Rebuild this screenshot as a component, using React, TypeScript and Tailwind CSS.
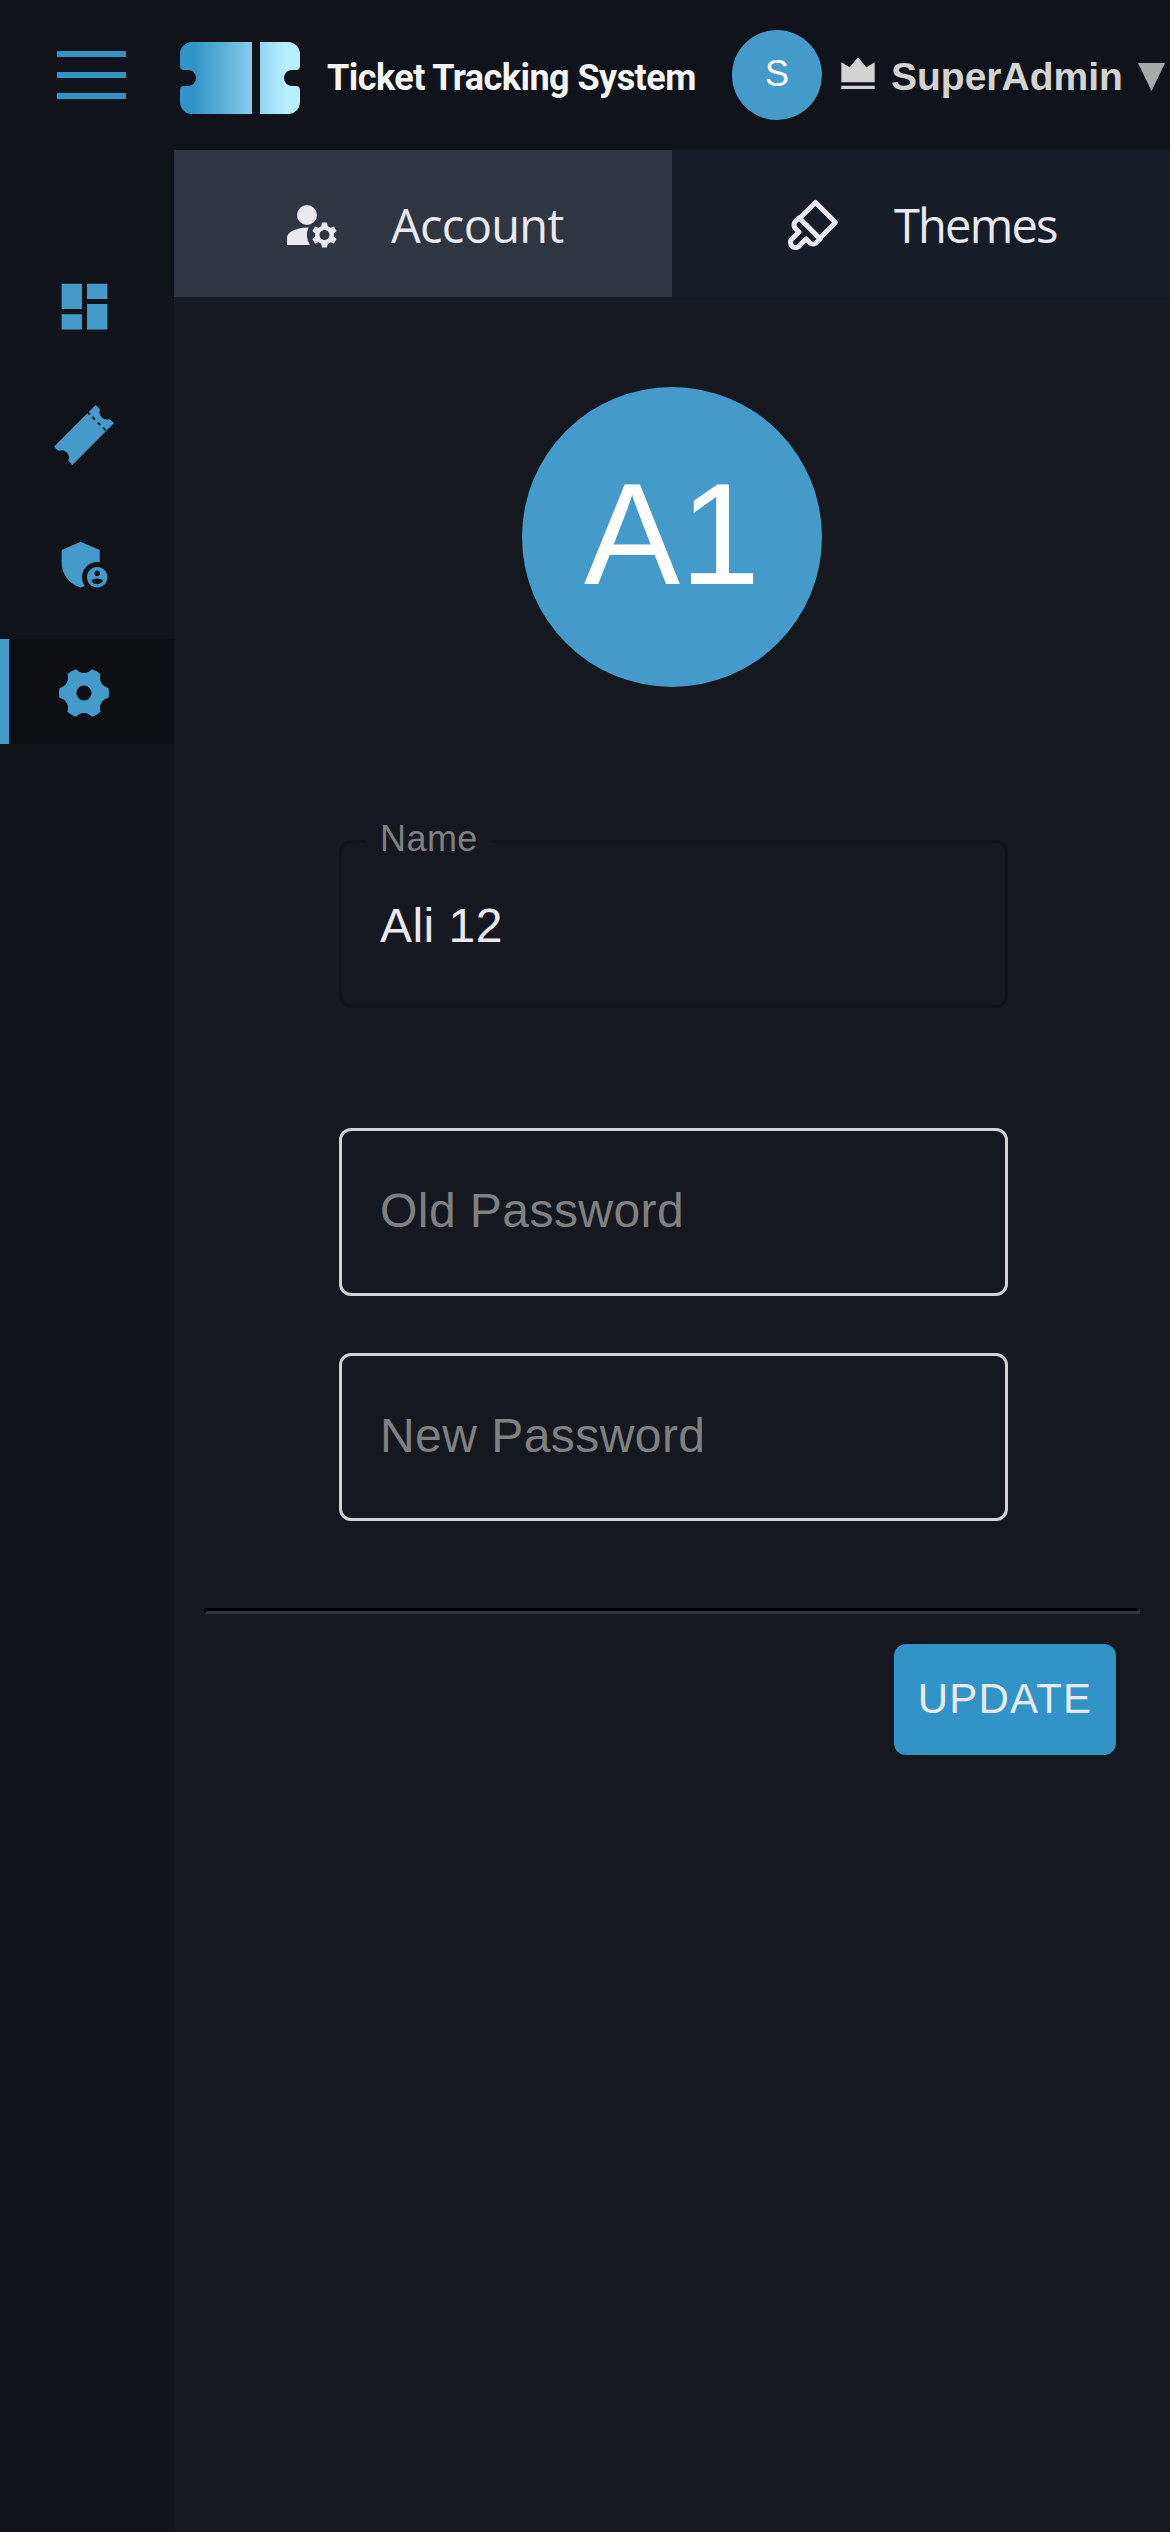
import type { ReactNode } from "react";
import { BiBrush } from "react-icons/bi";
import { MdAdminPanelSettings, MdDashboard, MdManageAccounts } from "react-icons/md";
import { RiSettings4Fill, RiVipCrownFill } from "react-icons/ri";

function TicketLogo() {
  return (
    <svg width="120" height="72" viewBox="0 0 120 72">
      <defs>
        <linearGradient id="logo" gradientUnits="userSpaceOnUse" x1="0" y1="0" x2="120" y2="0">
          <stop offset="0.12" stopColor="#3294c6" />
          <stop offset="0.88" stopColor="#b8efff" />
        </linearGradient>
      </defs>
      <path
        fill="url(#logo)"
        d="M12 0H72V72H12A12 12 0 0 1 0 60V48Q0 44 4 44H8A8 8 0 0 0 8 28H4Q0 28 0 24V12A12 12 0 0 1 12 0Z"
      />
      <path
        fill="url(#logo)"
        d="M80 0H108A12 12 0 0 1 120 12V24Q120 28 116 28H112A8 8 0 0 0 112 44H116Q120 44 120 48V60A12 12 0 0 1 108 72H80Z"
      />
    </svg>
  );
}

function TicketIcon() {
  return (
    <svg width="60" height="60" viewBox="0 0 180 180" fill="currentColor">
      <path d="M125 0 138 13A22 22 0 0 0 166 42L180 54 55 180 43 167A22 22 0 0 0 14 138L0 125Z" />
      <path
        d="M101 22l7 7M115 36l8 8M131 52l8 8M147 68l8 8"
        stroke="#10131a"
        strokeWidth="5.5"
        fill="none"
      />
    </svg>
  );
}

function NavItem({ children }: { children: ReactNode }) {
  return <div className="flex h-[105px] items-center pl-[54px] pt-[3px]">{children}</div>;
}

function PasswordField({ label }: { label: string }) {
  return (
    <label className="flex h-[168px] w-[669px] items-center rounded-xl border-[3px] border-[#d3d3d3] px-[38px] pb-[3px] text-[48px] leading-none tracking-[0.00938em] text-[#808080]">
      {label}
    </label>
  );
}

export default function App() {
  return (
    <div className="flex h-[2532px] w-[1170px] flex-col overflow-hidden bg-[#15181f] font-['Liberation_Sans',Arial,sans-serif]">
      <header className="flex h-[150px] shrink-0 items-center bg-[#10131a]">
        <div className="ml-[57px] flex w-[69px] flex-col gap-[15px]">
          <span className="h-[6px] bg-[#3294c6]" />
          <span className="h-[6px] bg-[#3294c6]" />
          <span className="h-[6px] bg-[#3294c6]" />
        </div>
        <div className="ml-[54px] pt-[6px]">
          <TicketLogo />
        </div>
        <h1 className="ml-[27px] w-[405px] whitespace-nowrap pt-[5px] font-['Roboto',sans-serif] text-[36px] font-bold leading-none tracking-[-0.55px] text-[#f5f5f5]">
          Ticket Tracking System
        </h1>
        <div className="flex size-[90px] items-center justify-center rounded-full bg-[#449bc9] pb-[2px] text-[36px] leading-none text-white">
          S
        </div>
        <RiVipCrownFill size={40} className="mb-[2px] ml-4 shrink-0 text-[#d3d3d3]" />
        <span className="ml-[13px] w-[247px] pt-[3px] text-[39px] font-bold leading-none text-[#d3d3d3]">
          SuperAdmin
        </span>
        <svg width="27" height="28" viewBox="0 0 27 28" className="mt-1 shrink-0">
          <path d="M0 0H27L13.5 28Z" fill="#a9a9a9" />
        </svg>
      </header>

      <div className="flex flex-1">
        <nav className="flex w-[174px] shrink-0 flex-col gap-6 bg-[#10131a] pt-[102px] text-[#449bc9]">
          <NavItem>
            <MdDashboard size={61} />
          </NavItem>
          <NavItem>
            <TicketIcon />
          </NavItem>
          <NavItem>
            <MdAdminPanelSettings size={61} />
          </NavItem>
          <div className="flex h-[105px] items-center border-l-[9px] border-[#449bc9] bg-[#0e0f13] pl-[45px] pt-[3px]">
            <RiSettings4Fill size={60} />
          </div>
        </nav>

        <main className="flex flex-1 flex-col items-center">
          <div className="flex h-[153px] w-full bg-[#171d26] font-['Open_Sans','Noto_Sans',sans-serif] text-[47px] leading-none text-[#ebe9f0]">
            <div className="flex h-[147px] w-[498px] items-center bg-[#303641] pl-[108px] pt-[3px]">
              <MdManageAccounts size={60} />
              <span className="ml-[49px] tracking-[-0.7px]">Account</span>
            </div>
            <div className="flex h-[147px] w-[498px] items-center pl-[111px] pt-[3px]">
              <BiBrush size={60} />
              <span className="ml-[51px] tracking-[-1.8px]">Themes</span>
            </div>
          </div>

          <div className="mt-[84px] flex size-[300px] items-center justify-center rounded-full bg-[#449bc9] pb-1 text-[144px] leading-none text-white">
            A1
          </div>

          <div className="relative ml-[3px] mt-[153px] flex h-[168px] w-[669px] items-center rounded-xl border-[3px] border-[#121316] px-[38px] pt-[3px] text-[48px] leading-none tracking-[0.00938em] text-[#ebe9f0]">
            <span className="absolute -top-[22px] left-6 h-[36px] w-[126px] bg-[#15181f] pl-[14px] text-[36px] leading-none text-[#808080]">
              Name
            </span>
            Ali 12
          </div>

          <div className="ml-[3px] mt-[120px] flex flex-col gap-[57px]">
            <PasswordField label="Old Password" />
            <PasswordField label="New Password" />
          </div>

          <div className="mt-[87px] w-[936px] border-[3px] border-b-[#303641] border-l-black border-r-[#303641] border-t-black" />

          <button className="mr-[54px] mt-[30px] flex h-[111px] w-[222px] items-center justify-center self-end rounded-xl bg-[#3294c6] pb-[2px] text-[42px] leading-none tracking-[0.02857em] text-[#ebe9f0]">
            UPDATE
          </button>
        </main>
      </div>
    </div>
  );
}
